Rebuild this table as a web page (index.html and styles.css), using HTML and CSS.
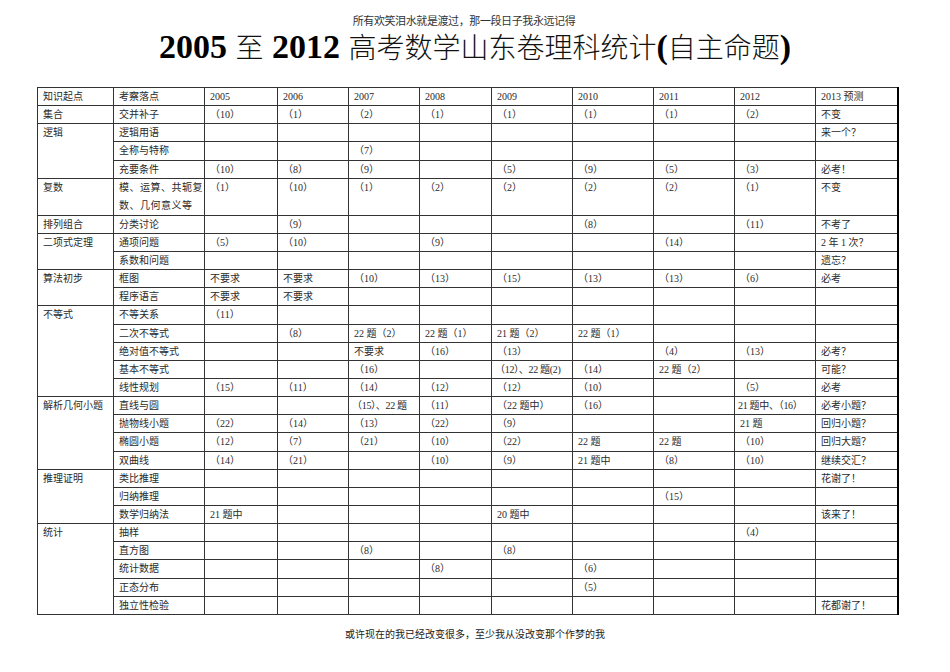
FILE: index.html
```html
<!DOCTYPE html>
<html lang="zh-CN">
<head>
<meta charset="utf-8">
<title>2005至2012高考数学山东卷理科统计</title>
<link rel="stylesheet" href="styles.css">
</head>
<body>
<div class="page">
  <div class="subtitle">所有欢笑泪水就是渡过，那一段日子我永远记得</div>
  <h1 class="title">2005 <span class="cjk">至</span> 2012 <span class="cjk">高考数学山东卷理科统计</span>(<span class="cjk">自主命题</span>)</h1>
  <table class="stats">
    <colgroup>
      <col class="c1"><col class="c2"><col class="c3"><col class="c4"><col class="c5"><col class="c6"><col class="c7"><col class="c8"><col class="c9"><col class="c10"><col class="c11">
    </colgroup>
    <tbody>
      <tr><td>知识起点</td><td>考察落点</td><td>2005</td><td>2006</td><td>2007</td><td>2008</td><td>2009</td><td>2010</td><td>2011</td><td>2012</td><td>2013 预测</td></tr>
      <tr><td>集合</td><td>交并补子</td><td>（10）</td><td>（1）</td><td>（2）</td><td>（1）</td><td>（1）</td><td>（1）</td><td>（1）</td><td>（2）</td><td>不变</td></tr>
      <tr><td rowspan="3" class="top">逻辑</td><td>逻辑用语</td><td></td><td></td><td></td><td></td><td></td><td></td><td></td><td></td><td>来一个？</td></tr>
      <tr><td>全称与特称</td><td></td><td></td><td>（7）</td><td></td><td></td><td></td><td></td><td></td><td></td></tr>
      <tr><td>充要条件</td><td>（10）</td><td>（8）</td><td>（9）</td><td></td><td>（5）</td><td>（9）</td><td>（5）</td><td>（3）</td><td>必考！</td></tr>
      <tr class="double"><td class="top">复数</td><td class="top wrap">模、运算、共轭复<br>数、几何意义等</td><td class="top">（1）</td><td class="top">（10）</td><td class="top">（1）</td><td class="top">（2）</td><td class="top">（2）</td><td class="top">（2）</td><td class="top">（2）</td><td class="top">（1）</td><td class="top">不变</td></tr>
      <tr><td>排列组合</td><td>分类讨论</td><td></td><td>（9）</td><td></td><td></td><td></td><td>（8）</td><td></td><td>（11）</td><td>不考了</td></tr>
      <tr><td rowspan="2" class="top">二项式定理</td><td>通项问题</td><td>（5）</td><td>（10）</td><td></td><td>（9）</td><td></td><td></td><td>（14）</td><td></td><td>2 年 1 次？</td></tr>
      <tr><td>系数和问题</td><td></td><td></td><td></td><td></td><td></td><td></td><td></td><td></td><td>遗忘？</td></tr>
      <tr><td rowspan="2" class="top">算法初步</td><td>框图</td><td>不要求</td><td>不要求</td><td>（10）</td><td>（13）</td><td>（15）</td><td>（13）</td><td>（13）</td><td>（6）</td><td>必考</td></tr>
      <tr><td>程序语言</td><td>不要求</td><td>不要求</td><td></td><td></td><td></td><td></td><td></td><td></td><td></td></tr>
      <tr><td rowspan="5" class="top">不等式</td><td>不等关系</td><td>（11）</td><td></td><td></td><td></td><td></td><td></td><td></td><td></td><td></td></tr>
      <tr><td>二次不等式</td><td></td><td>（8）</td><td>22 题（2）</td><td>22 题（1）</td><td>21 题（2）</td><td>22 题（1）</td><td></td><td></td><td></td></tr>
      <tr><td>绝对值不等式</td><td></td><td></td><td>不要求</td><td>（16）</td><td>（13）</td><td></td><td>（4）</td><td>（13）</td><td>必考？</td></tr>
      <tr><td>基本不等式</td><td></td><td></td><td>（16）</td><td></td><td class="tight">（12）、22 题(2)</td><td>（14）</td><td>22 题（2）</td><td></td><td>可能？</td></tr>
      <tr><td>线性规划</td><td>（15）</td><td>（11）</td><td>（14）</td><td>（12）</td><td>（12）</td><td>（10）</td><td></td><td>（5）</td><td>必考</td></tr>
      <tr><td rowspan="4" class="top">解析几何小题</td><td>直线与圆</td><td></td><td></td><td class="tight">（15）、22 题</td><td>（11）</td><td>（22 题中）</td><td>（16）</td><td></td><td class="tight">21 题中、（16）</td><td>必考小题？</td></tr>
      <tr><td>抛物线小题</td><td>（22）</td><td>（14）</td><td>（13）</td><td>（22）</td><td>（9）</td><td></td><td></td><td>21 题</td><td>回归小题？</td></tr>
      <tr><td>椭圆小题</td><td>（12）</td><td>（7）</td><td>（21）</td><td>（10）</td><td>（22）</td><td>22 题</td><td>22 题</td><td>（10）</td><td>回归大题？</td></tr>
      <tr><td>双曲线</td><td>（14）</td><td>（21）</td><td></td><td>（10）</td><td>（9）</td><td>21 题中</td><td>（8）</td><td>（10）</td><td>继续交汇？</td></tr>
      <tr><td rowspan="3" class="top">推理证明</td><td>类比推理</td><td></td><td></td><td></td><td></td><td></td><td></td><td></td><td></td><td>花谢了！</td></tr>
      <tr><td>归纳推理</td><td></td><td></td><td></td><td></td><td></td><td></td><td>（15）</td><td></td><td></td></tr>
      <tr><td>数学归纳法</td><td>21 题中</td><td></td><td></td><td></td><td>20 题中</td><td></td><td></td><td></td><td>该来了！</td></tr>
      <tr><td rowspan="5" class="top">统计</td><td>抽样</td><td></td><td></td><td></td><td></td><td></td><td></td><td></td><td>（4）</td><td></td></tr>
      <tr><td>直方图</td><td></td><td></td><td>（8）</td><td></td><td>（8）</td><td></td><td></td><td></td><td></td></tr>
      <tr><td>统计数据</td><td></td><td></td><td></td><td>（8）</td><td></td><td>（6）</td><td></td><td></td><td></td></tr>
      <tr><td>正态分布</td><td></td><td></td><td></td><td></td><td></td><td>（5）</td><td></td><td></td><td></td></tr>
      <tr><td>独立性检验</td><td></td><td></td><td></td><td></td><td></td><td></td><td></td><td></td><td>花都谢了！</td></tr>
    </tbody>
  </table>
  <div class="footer">或许现在的我已经改变很多，至少我从没改变那个作梦的我</div>
</div>
</body>
</html>
```

FILE: styles.css
```css
html, body {
  margin: 0;
  padding: 0;
  background: #ffffff;
}

.page {
  width: 950px;
  height: 672px;
  overflow: hidden;
  font-family: "Liberation Serif", "Noto Sans CJK SC", serif;
  color: #222222;
}

.subtitle {
  margin: 13px 0 0 0;
  padding-right: 22px;
  height: 14px;
  line-height: 14px;
  font-size: 11px;
  letter-spacing: -0.4px;
  text-align: center;
  font-family: "Noto Sans CJK SC", sans-serif;
  color: #333333;
}

.title {
  margin: 2px 0 0 0;
  height: 34px;
  line-height: 34px;
  font-size: 34px;
  font-weight: bold;
  text-align: center;
  color: #000000;
  font-family: "Liberation Serif", "Noto Sans CJK SC", serif;
  white-space: nowrap;
}

.title .cjk {
  font-family: "Noto Sans CJK SC", sans-serif;
  font-weight: 300;
  font-size: 28px;
  line-height: 34px;
  color: #111111;
}

.stats {
  margin: 24px 0 0 37px;
  width: 861px;
  border-collapse: collapse;
  table-layout: fixed;
  font-size: 10px;
  border-right: 2px solid #000000;
  border-left: 1px solid #555555;
}

.stats col.c1 { width: 76px; }
.stats col.c2 { width: 91px; }
.stats col.c3 { width: 73px; }
.stats col.c4 { width: 71px; }
.stats col.c5 { width: 71px; }
.stats col.c6 { width: 72px; }
.stats col.c7 { width: 81px; }
.stats col.c8 { width: 81px; }
.stats col.c9 { width: 81px; }
.stats col.c10 { width: 81px; }
.stats col.c11 { width: 82px; }

.stats td {
  border: 1px solid #333333;
  height: 17.15px;
  padding: 0 0 0 5px;
  line-height: 17px;
  vertical-align: middle;
  white-space: nowrap;
  overflow: hidden;
  font-family: "Liberation Serif", "Noto Sans CJK SC", serif;
  color: #2a2a2a;
}

.stats td.top {
  vertical-align: top;
}

.stats tr.double td {
  height: 34.5px;
}

.stats td.wrap {
  line-height: 18px;
  padding-right: 0;
  letter-spacing: 0.5px;
}

.stats td.tight {
  padding-left: 3px;
  letter-spacing: -0.3px;
}

.footer {
  margin-top: 12px;
  text-align: center;
  font-size: 10px;
  line-height: 14px;
  font-family: "Noto Sans CJK SC", sans-serif;
  color: #222222;
}
```
